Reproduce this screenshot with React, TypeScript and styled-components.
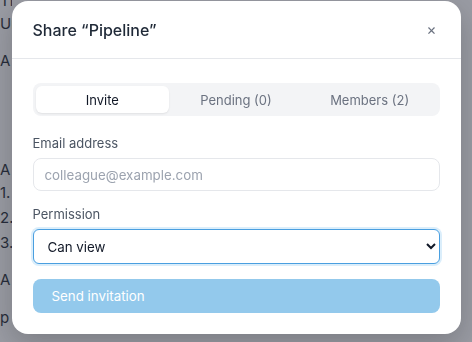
import React from "react";
import styled, { createGlobalStyle } from "styled-components";

const GlobalStyle = createGlobalStyle`
  html, body {
    margin: 0;
    padding: 0;
    background: #ffffff;
    font-family: "Inter", "Liberation Sans", sans-serif;
  }
`;

const tabs = ["Invite", "Pending (0)", "Members (2)"];

function App() {
  return (
    <>
      <GlobalStyle />
      <Page>
        <PageLine $gap={-10}>This is a planning</PageLine>
        <PageLine $gap={2}>Under</PageLine>
        <PageLine $gap={16}>A li</PageLine>
        <PageLine $gap={88}>A n</PageLine>
        <PageLine $gap={2}>1.</PageLine>
        <PageLine>2.</PageLine>
        <PageLine>3.</PageLine>
        <PageLine $gap={16}>A c</PageLine>
        <PageLine $gap={17}>p</PageLine>
      </Page>
      <Overlay>
        <Modal>
          <Header>
            <Title>Share “Pipeline”</Title>
            <Close>×</Close>
          </Header>
          <Body>
            <Tabs>
              {tabs.map((t, i) => (
                <Tab key={t} $active={i === 0}>
                  {t}
                </Tab>
              ))}
            </Tabs>
            <Field>
              <Label>Email address</Label>
              <Input placeholder="colleague@example.com" />
            </Field>
            <Field>
              <Label>Permission</Label>
              <Select defaultValue="view">
                <option value="view">Can view</option>
                <option value="edit">Can edit</option>
              </Select>
            </Field>
            <SendButton disabled>Send invitation</SendButton>
          </Body>
        </Modal>
      </Overlay>
    </>
  );
}

const Page = styled.div`
  width: 12px;
  overflow: hidden;
  color: #111827;
  font-size: 15px;
`;

const PageLine = styled.p<{ $gap?: number }>`
  margin: ${(p) => p.$gap ?? 4}px 0 0 0;
  line-height: 21px;
  white-space: nowrap;
`;

const Overlay = styled.div`
  position: fixed;
  inset: 0;
  background: rgba(60, 64, 78, 0.52);
  display: flex;
  justify-content: center;
  align-items: flex-start;
  padding-top: 1px;
`;

const Modal = styled.div`
  width: 449px;
  height: 333px;
  background: #ffffff;
  border-radius: 16px;
  box-shadow: 0 10px 30px rgba(0, 0, 0, 0.2);
  display: flex;
  flex-direction: column;
  overflow: hidden;
`;

const Header = styled.div`
  height: 57px;
  display: flex;
  align-items: center;
  justify-content: space-between;
  padding: 0 24px 0 21px;
  border-bottom: 1px solid #e5e7eb;
`;

const Title = styled.h2`
  margin: 0;
  font-size: 16px;
  font-weight: 500;
  color: #1f2937;
`;

const Close = styled.button`
  border: none;
  background: none;
  padding: 0;
  font-family: "Inter", sans-serif;
  font-size: 15px;
  color: #6b7280;
  cursor: pointer;
`;

const Body = styled.div`
  padding: 24px 21px 0 21px;
  display: flex;
  flex-direction: column;
`;

const Tabs = styled.div`
  display: grid;
  grid-template-columns: repeat(3, 1fr);
  padding: 3px;
  background: #f3f4f6;
  border-radius: 8px;
  height: 33px;
  box-sizing: border-box;
  margin-bottom: 19px;
`;

const Tab = styled.div<{ $active?: boolean }>`
  display: flex;
  align-items: center;
  justify-content: center;
  font-size: 13px;
  color: ${(p) => (p.$active ? "#111827" : "#6b7280")};
  background: ${(p) => (p.$active ? "#ffffff" : "transparent")};
  border-radius: 6px;
  box-shadow: ${(p) => (p.$active ? "0 1px 2px rgba(0,0,0,0.08)" : "none")};
`;

const Field = styled.div`
  display: flex;
  flex-direction: column;
  margin-bottom: 15px;
`;

const Label = styled.label`
  font-size: 13px;
  color: #4b5563;
  margin-bottom: 7px;
  line-height: 16px;
`;

const Input = styled.input`
  height: 33px;
  box-sizing: border-box;
  border: 1px solid #e5e7eb;
  border-radius: 8px;
  padding: 0 11px;
  font-family: "Inter", sans-serif;
  font-size: 13.333px;
  color: #111827;
  outline: none;
  &::placeholder {
    color: #9ca3af;
  }
`;

const Select = styled.select`
  height: 35px;
  box-sizing: border-box;
  border: 1px solid #4a9fe0;
  border-radius: 6px;
  padding: 0 10px;
  font-family: "Inter", sans-serif;
  font-size: 13.333px;
  color: #111827;
  background: #ffffff;
  box-shadow: 0 0 0 2px #dbeefb;
  outline: none;
`;

const SendButton = styled.button`
  height: 34px;
  border: none;
  border-radius: 8px;
  background: #93c9ec;
  color: #ffffff;
  font-family: "Inter", sans-serif;
  font-size: 13.333px;
  text-align: left;
  padding: 0 19px;
`;

export default App;
